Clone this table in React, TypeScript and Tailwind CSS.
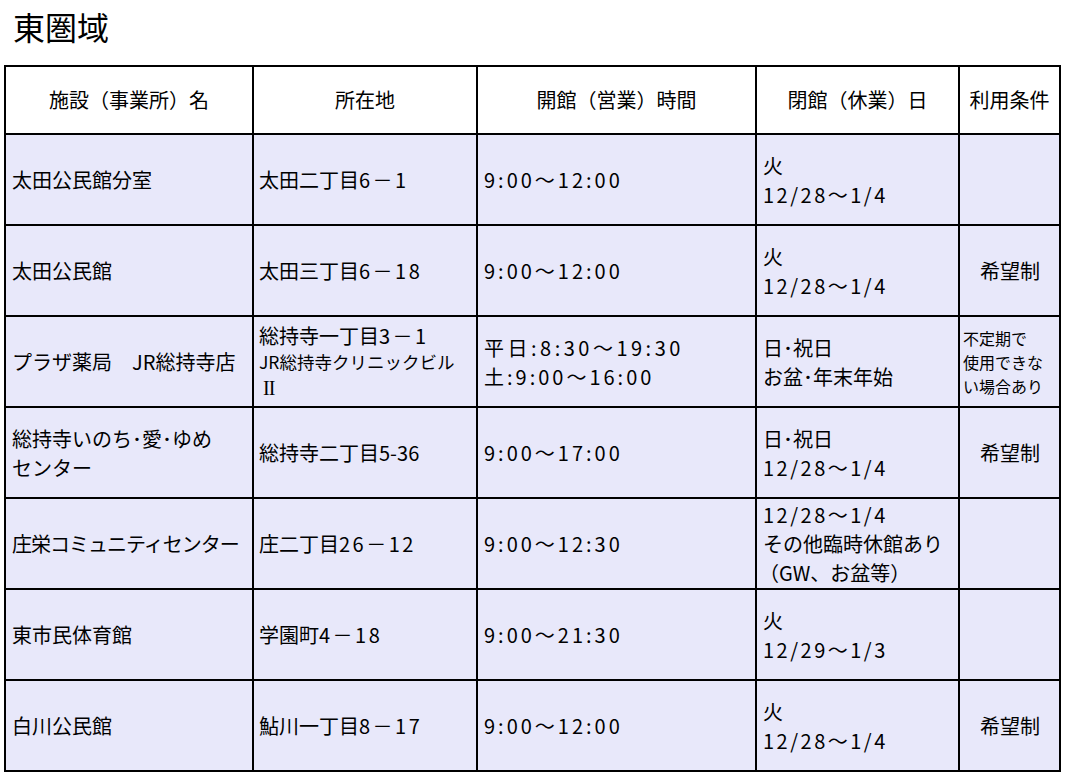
import React from "react";

const font = { fontFamily: '"Noto Sans CJK JP", "Noto Sans", sans-serif' };

const N = ({ children }: { children: React.ReactNode }) => (
  <span className="tracking-[2.5px]">{children}</span>
);
const H = ({ children }: { children: React.ReactNode }) => (
  <span className="tracking-[3px]">{children}</span>
);

type Row = {
  name: React.ReactNode;
  addr: React.ReactNode;
  hours: React.ReactNode;
  closed: React.ReactNode;
  cond: React.ReactNode;
};

const Kibou = () => <span className="block w-full text-center pr-[4px]">希望制</span>;

const rows: Row[] = [
  {
    name: "太田公民館分室",
    addr: (
      <>
        太田二丁目<N>6－1</N>
      </>
    ),
    hours: <H>9:00～12:00</H>,
    closed: (
      <>
        火<br />
        <N>12/28～1/4</N>
      </>
    ),
    cond: "",
  },
  {
    name: "太田公民館",
    addr: (
      <>
        太田三丁目<N>6－18</N>
      </>
    ),
    hours: <H>9:00～12:00</H>,
    closed: (
      <>
        火<br />
        <N>12/28～1/4</N>
      </>
    ),
    cond: <Kibou />,
  },
  {
    name: "プラザ薬局　JR総持寺店",
    addr: (
      <div>
        <div className="text-[20px] leading-[26px]">
          総持寺一丁目<N>3－1</N>
        </div>
        <div className="text-[17.5px] leading-[26px]">JR総持寺クリニックビル</div>
        <div
          className="text-[20px] leading-[26px] pl-[4px] tracking-[-1px]"
          style={{ fontFamily: '"Liberation Serif", serif' }}
        >
          II
        </div>
      </div>
    ),
    hours: (
      <>
        <span className="tracking-[3.5px]">平日:8:30～19:30</span>
        <br />
        <span className="tracking-[3px]">土:9:00～16:00</span>
      </>
    ),
    closed: (
      <>
        日･祝日
        <br />お盆･年末年始
      </>
    ),
    cond: (
      <div className="text-[16px] leading-[24px] -ml-[2px]">
        不定期で
        <br />
        使用できな
        <br />
        い場合あり
      </div>
    ),
  },
  {
    name: (
      <>
        総持寺いのち･愛･ゆめ
        <br />
        センター
      </>
    ),
    addr: "総持寺二丁目5-36",
    hours: <H>9:00～17:00</H>,
    closed: (
      <>
        日･祝日
        <br />
        <N>12/28～1/4</N>
      </>
    ),
    cond: <Kibou />,
  },
  {
    name: <span className="whitespace-nowrap tracking-[-1px]">庄栄コミュニティセンター</span>,
    addr: (
      <>
        庄二丁目<N>26－12</N>
      </>
    ),
    hours: <H>9:00～12:30</H>,
    closed: (
      <>
        <N>12/28～1/4</N>
        <br />
        その他臨時休館あり
        <br />
        <span className="-ml-[4px]">（GW、お盆等）</span>
      </>
    ),
    cond: "",
  },
  {
    name: "東市民体育館",
    addr: (
      <>
        学園町<N>4－18</N>
      </>
    ),
    hours: <H>9:00～21:30</H>,
    closed: (
      <>
        火<br />
        <N>12/29～1/3</N>
      </>
    ),
    cond: "",
  },
  {
    name: "白川公民館",
    addr: (
      <>
        鮎川一丁目<N>8－17</N>
      </>
    ),
    hours: <H>9:00～12:00</H>,
    closed: (
      <>
        火<br />
        <N>12/28～1/4</N>
      </>
    ),
    cond: <Kibou />,
  },
];

const headers = ["施設（事業所）名", "所在地", "開館（営業）時間", "閉館（休業）日", "利用条件"];

export default function App() {
  return (
    <div className="w-[1065px] h-[774px] overflow-hidden bg-white text-black" style={font}>
      <div className="pt-[6px] pl-[13px] text-[32px] leading-[40px]">東圏域</div>
      <div className="mt-[19px] ml-[4px] w-[1057px] border-l-2 border-t-2 border-black grid grid-cols-[248px_224px_279px_203px_101px]">
        {headers.map((h, i) => (
          <div
            key={i}
            className="h-[68px] border-r-2 border-b-2 border-black bg-white flex items-center justify-center text-[20px] whitespace-nowrap"
          >
            {h}
          </div>
        ))}
        {rows.map((r, i) => (
          <React.Fragment key={i}>
            <div className="h-[91px] border-r-2 border-b-2 border-black bg-[#e8e8fa] flex items-center pl-[6px] text-[20px] leading-[29px]">
              <div>{r.name}</div>
            </div>
            <div className="h-[91px] border-r-2 border-b-2 border-black bg-[#e8e8fa] flex items-center pl-[5px] text-[20px] leading-[29px] whitespace-nowrap">
              <div>{r.addr}</div>
            </div>
            <div className="h-[91px] border-r-2 border-b-2 border-black bg-[#e8e8fa] flex items-center pl-[6px] text-[20px] leading-[29px] whitespace-nowrap">
              <div>{r.hours}</div>
            </div>
            <div className="h-[91px] border-r-2 border-b-2 border-black bg-[#e8e8fa] flex items-center pl-[6px] text-[20px] leading-[29px] whitespace-nowrap">
              <div>{r.closed}</div>
            </div>
            <div className="h-[91px] border-r-2 border-b-2 border-black bg-[#e8e8fa] flex items-center pl-[5px] text-[20px] leading-[29px] whitespace-nowrap">
              {r.cond}
            </div>
          </React.Fragment>
        ))}
      </div>
    </div>
  );
}
